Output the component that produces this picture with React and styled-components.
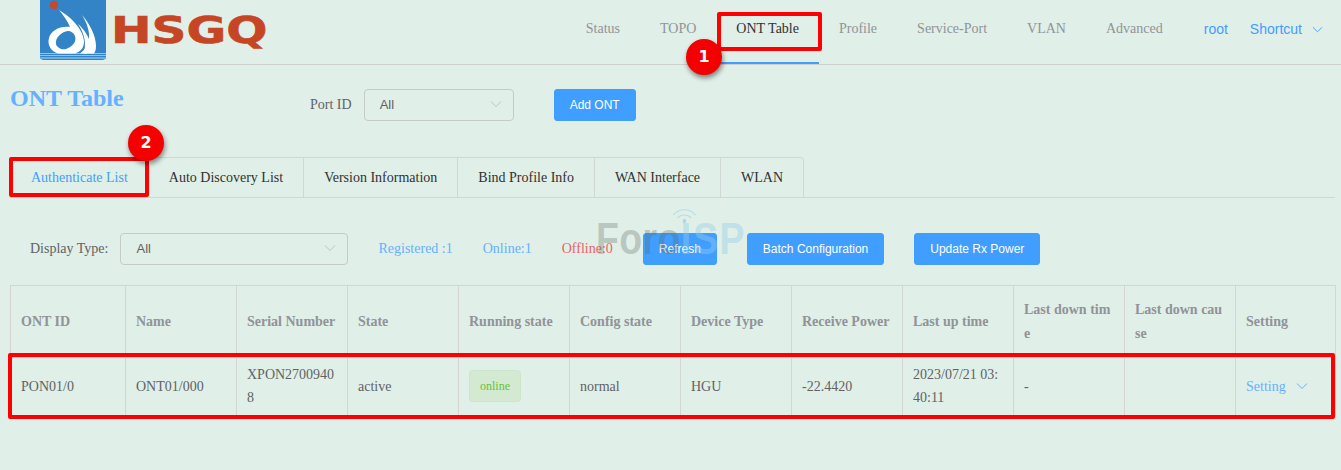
import React from 'react';
import styled, { createGlobalStyle } from 'styled-components';

const GlobalStyle = createGlobalStyle`
  html, body {
    margin: 0;
    background: #e0efe7;
    font-family: "Liberation Serif", "Times New Roman", serif;
    font-size: 14px;
    color: #606266;
  }
  * { box-sizing: border-box; }
`;

const Page = styled.div`
  position: relative;
  width: 1341px;
  height: 470px;
  overflow: hidden;
`;

const Header = styled.header`
  display: flex;
  align-items: stretch;
  justify-content: space-between;
  height: 65px;
  padding-left: 40px;
  border-bottom: 1px solid #cfcfcb;
`;

const Brand = styled.div`
  display: flex;
  align-items: flex-start;
  gap: 5px;
`;

const BrandName = styled.span`
  display: block;
  margin-top: 9px;
  font-family: "DejaVu Sans", sans-serif;
  font-weight: 700;
  font-size: 37px;
  line-height: 44px;
  color: #c64524;
  -webkit-text-stroke: 0.6px #c64524;
  transform: scaleX(1.31);
  transform-origin: left center;
`;

const Nav = styled.nav`
  display: flex;
  align-items: stretch;
  height: 64px;
  padding-right: 18px;
`;

const NavItem = styled.a`
  display: block;
  padding: 0 20px;
  height: 64px;
  line-height: 57px;
  color: ${p => (p.$active ? '#303133' : '#909399')};
  border-bottom: 2px solid ${p => (p.$active ? '#409eff' : 'transparent')};
`;

const UserLink = styled.span`
  font-family: "Liberation Sans", Arial, sans-serif;
  color: #409eff;
  margin-left: ${p => p.$gap}px;
  display: flex;
  align-items: center;
  height: 58px;
`;

const ShortcutArrow = styled.span`
  display: flex;
  margin-left: 10px;
`;

const Main = styled.main`
  padding: 0 6px 0 10px;
`;

const TopRow = styled.div`
  display: flex;
  align-items: center;
  height: 32px;
  margin-top: 24px;
`;

const Title = styled.h2`
  align-self: flex-start;
  margin: -5px 0 0;
  width: 300px;
  font-size: 24px;
  line-height: 28px;
  font-weight: 700;
  color: #66b1ff;
`;

const Label = styled.label`
  color: #606266;
  margin-right: 12px;
`;

const Select = styled.div`
  display: flex;
  align-items: center;
  justify-content: space-between;
  width: ${p => p.$width}px;
  height: 32px;
  padding: 0 11px 2px 15px;
  border: 1px solid #c6cbca;
  border-radius: 4px;
  font-family: "Liberation Sans", Arial, sans-serif;
  font-size: 13px;
  color: #606266;
`;

const Button = styled.button`
  height: 32px;
  padding: 0 15px;
  margin-left: ${p => p.$gap || 0}px;
  border: 1px solid #409eff;
  border-radius: 3px;
  background: #409eff;
  color: #fff;
  font-family: "Liberation Sans", Arial, sans-serif;
  font-size: 12px;
`;

const Tabs = styled.div`
  display: flex;
  height: 41px;
  margin-top: 36px;
  border-bottom: 1px solid #d2d6d6;
`;

const TabGroup = styled.div`
  display: flex;
  height: 41px;
  border: 1px solid #d2d6d6;
  border-bottom: none;
  border-radius: 4px 4px 0 0;
`;

const Tab = styled.div`
  padding: 0 20px;
  line-height: 40px;
  color: ${p => (p.$active ? '#409eff' : '#303133')};
  border-left: ${p => (p.$first ? 'none' : '1px solid #d2d6d6')};
`;

const FilterRow = styled.div`
  display: flex;
  align-items: center;
  height: 32px;
  margin-top: 35px;
  padding-left: 20px;
`;

const Stat = styled.span`
  margin-left: ${p => p.$gap}px;
  color: ${p => p.$color};
`;

const Table = styled.table`
  width: 1325px;
  margin-top: 20px;
  border-collapse: collapse;
  table-layout: fixed;
  border: 1px solid #d2d6d6;
`;

const Th = styled.th`
  width: ${p => p.$width}px;
  height: 72px;
  padding: 0 10px;
  border: 1px solid #d2d6d6;
  text-align: left;
  font-weight: 700;
  line-height: 24px;
  color: #909399;
  word-break: break-all;
`;

const Td = styled.td`
  height: 58px;
  padding: 0 10px 1px;
  border: 1px solid #d2d6d6;
  line-height: 23px;
  color: #606266;
  word-break: break-all;
`;

const StatusTag = styled.span`
  display: inline-block;
  height: 32px;
  padding: 0 10px;
  line-height: 30px;
  font-size: 12px;
  vertical-align: middle;
  margin-top: -1px;
  color: #67c23a;
  background: #d3e9d2;
  border: 1px solid #cde5cb;
  border-radius: 4px;
`;

const SettingLink = styled.span`
  display: inline-flex;
  align-items: center;
  gap: 10px;
  color: #66b1ff;
`;

const Watermark = styled.div`
  position: absolute;
  left: 596px;
  top: 214px;
  height: 50px;
  font-family: "Liberation Sans", Arial, sans-serif;
  font-weight: 700;
  font-size: 44px;
  line-height: 50px;
  color: rgba(90, 100, 95, 0.3);
  pointer-events: none;
  transform: scaleX(0.85);
  transform-origin: left center;
  letter-spacing: 0.5px;
`;

const WatermarkBlue = styled.span`
  color: rgba(150, 205, 235, 0.42);
  letter-spacing: 2px;
`;

const WatermarkWifi = styled.svg`
  position: absolute;
  left: 88px;
  top: -9px;
`;

const Highlight = styled.div`
  position: absolute;
  left: ${p => p.$x}px;
  top: ${p => p.$y}px;
  width: ${p => p.$w}px;
  height: ${p => p.$h}px;
  border: 4px solid #ff0000;
  border-radius: 2px;
  pointer-events: none;
`;

const Marker = styled.div`
  position: absolute;
  left: ${p => p.$x}px;
  top: ${p => p.$y}px;
  width: 36px;
  height: 36px;
  border-radius: 50%;
  background: #f40000;
  box-shadow: 1px 3px 5px rgba(0, 0, 0, 0.45);
  color: #fff;
  font-family: "DejaVu Sans", sans-serif;
  font-weight: 700;
  font-size: 16px;
  line-height: 36px;
  text-align: center;
`;

const Chevron = ({ color = '#c0c4cc', size = 12 }) => (
  <svg width={size} height={size} viewBox="0 0 12 12" fill="none" stroke={color} strokeWidth="1">
    <path d="M1 3.5 L6 8.5 L11 3.5" />
  </svg>
);

const Logo = () => (
  <svg width="66" height="60" viewBox="0 0 66 60">
    <path d="M0 0H66V56a4 4 0 0 1-4 4H4a4 4 0 0 1-4-4Z" fill="#3384c6" />
    <rect y="53" width="66" height="1" fill="#8cc4ea" />
    <rect y="55" width="66" height="1" fill="#8cc4ea" />
    <rect y="57" width="66" height="2" fill="#6db0e0" />
    <circle cx="14" cy="5" r="4.2" fill="#c9472a" />
    <path
      fillRule="evenodd"
      fill="#fff"
      d="M19 10C31 17 44 30 44 42C44 48 40 52 35 53.5H19C11 52 7 45 9 38C11 31 19 26 30 27C27 20 23 15 19 10ZM28 31C21 32 15 38 16 44C17 48 22 50 26 49C32 47 37 42 35 36C34 33 31 31 28 31Z"
    />
    <path d="M42 15C50 24 56 36 56 46C56 50 55 52 54 53.5H40C45 50 48 45 49 39C50 32 47 23 42 15Z" fill="#fff" />
    <path d="M38 24C44 29 50 38 51 46L47 53.5H43C47 46 45 34 38 24Z" fill="#fff" />
  </svg>
);

const navItems = ['Status', 'TOPO', 'ONT Table', 'Profile', 'Service-Port', 'VLAN', 'Advanced'];
const tabs = ['Authenticate List', 'Auto Discovery List', 'Version Information', 'Bind Profile Info', 'WAN Interface', 'WLAN'];
const columns = [
  ['ONT ID', 115],
  ['Name', 111],
  ['Serial Number', 111],
  ['State', 111],
  ['Running state', 111],
  ['Config state', 111],
  ['Device Type', 111],
  ['Receive Power', 111],
  ['Last up time', 111],
  ['Last down time', 111],
  ['Last down cause', 111],
  ['Setting', 100],
];

const App = () => {
  return (
    <Page>
      <GlobalStyle />
      <Header>
        <Brand>
          <Logo />
          <BrandName>HSGQ</BrandName>
        </Brand>
        <Nav>
          {navItems.map(item => (
            <NavItem key={item} $active={item === 'ONT Table'}>{item}</NavItem>
          ))}
          <UserLink $gap={21}>root</UserLink>
          <UserLink $gap={22}>
            Shortcut
            <ShortcutArrow><Chevron color="#409eff" size={11} /></ShortcutArrow>
          </UserLink>
        </Nav>
      </Header>
      <Main>
        <TopRow>
          <Title>ONT Table</Title>
          <Label>Port ID</Label>
          <Select $width={150}>All<Chevron /></Select>
          <Button $gap={40}>Add ONT</Button>
        </TopRow>
        <Tabs>
          <TabGroup>
            {tabs.map((tab, i) => (
              <Tab key={tab} $first={i === 0} $active={i === 0}>{tab}</Tab>
            ))}
          </TabGroup>
        </Tabs>
        <FilterRow>
          <Label>Display Type:</Label>
          <Select $width={228}>All<Chevron /></Select>
          <Stat $gap={30} $color="#66b1ff">Registered :1</Stat>
          <Stat $gap={30} $color="#66b1ff">Online:1</Stat>
          <Stat $gap={30} $color="#e8636a">Offline:0</Stat>
          <Button $gap={30}>Refresh</Button>
          <Button $gap={30}>Batch Configuration</Button>
          <Button $gap={30}>Update Rx Power</Button>
        </FilterRow>
        <Table>
          <thead>
            <tr>
              {columns.map(([name, width]) => (
                <Th key={name} $width={width}>{name}</Th>
              ))}
            </tr>
          </thead>
          <tbody>
            <tr>
              <Td>PON01/0</Td>
              <Td>ONT01/000</Td>
              <Td>XPON27009408</Td>
              <Td>active</Td>
              <Td><StatusTag>online</StatusTag></Td>
              <Td>normal</Td>
              <Td>HGU</Td>
              <Td>-22.4420</Td>
              <Td>2023/07/21 03:40:11</Td>
              <Td>-</Td>
              <Td />
              <Td>
                <SettingLink>Setting<Chevron color="#66b1ff" /></SettingLink>
              </Td>
            </tr>
          </tbody>
        </Table>
      </Main>

      <Watermark>
        Foro<WatermarkBlue>ISP</WatermarkBlue>
        <WatermarkWifi width="32" height="28" viewBox="0 0 32 28" fill="none" stroke="rgba(150,205,235,0.55)" strokeWidth="1.2">
          <path d="M3 10C10 3 22 3 29 10" />
          <path d="M8 13C12 9 20 9 24 13" />
          <circle cx="16" cy="16" r="1.6" fill="rgba(150,205,235,0.7)" />
        </WatermarkWifi>
      </Watermark>

      <Highlight $x={717} $y={12} $w={105} $h={39} />
      <Highlight $x={9} $y={157} $w={140} $h={40} />
      <Highlight $x={8} $y={353} $w={1327} $h={66} />
      <Marker $x={686} $y={39}>1</Marker>
      <Marker $x={128} $y={125}>2</Marker>
    </Page>
  );
};

export default App;
